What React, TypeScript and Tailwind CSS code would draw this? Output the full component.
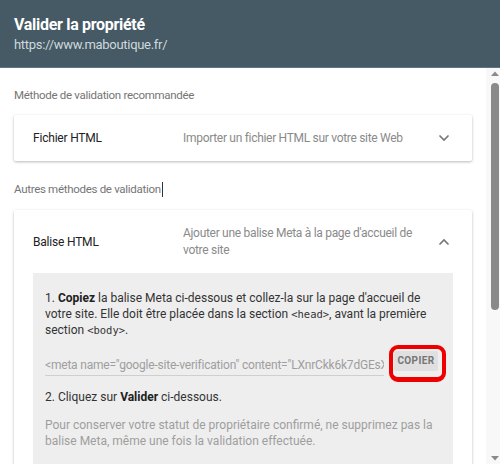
import React from "react";

const Chevron: React.FC<{ up?: boolean }> = ({ up }) => (
  <svg width="12" height="8" viewBox="0 0 12 8" className="shrink-0">
    <path
      d={up ? "M1.5 6.5 L6 2 L10.5 6.5" : "M1.5 1.5 L6 6 L10.5 1.5"}
      fill="none"
      stroke="#757575"
      strokeWidth="1.6"
    />
  </svg>
);

const Scrollbar: React.FC = () => (
  <div className="w-[14px] shrink-0 bg-[#f8f8f8] flex flex-col items-center pt-[3px] pb-[3px]">
    <svg width="8" height="6" viewBox="0 0 8 6" className="ml-[4px]">
      <path d="M0 5 L4 0.5 L8 5 Z" fill="#8a8a8a" />
    </svg>
    <div className="w-[8px] h-[227px] mt-[6px] ml-[4px] rounded-[4px] bg-[#8a8a8a]" />
    <div className="flex-1" />
    <svg width="8" height="6" viewBox="0 0 8 6" className="ml-[4px]">
      <path d="M0 1 L4 5.5 L8 1 Z" fill="#8a8a8a" />
    </svg>
  </div>
);

export default function App() {
  const metaTag =
    '<meta name="google-site-verification" content="LXnrCkk6k7dGEsXq3vYtM2pQwZ8rBn1cHfJ0aUeKdI" />';

  return (
    <div className="w-[500px] h-[464px] flex flex-col overflow-hidden bg-white font-['Roboto',sans-serif]">
      {/* Header */}
      <div className="h-[68px] shrink-0 bg-[#455a64] px-[14px] pt-[15px] border-b border-b-[#5f7480]">
        <div className="text-[16px] leading-[20px] font-bold tracking-[-0.3px] text-white">
          Valider la propriété
        </div>
        <div className="text-[13px] leading-[18px] tracking-[-0.3px] text-[#cfd8dc] mt-[1px]">
          https://www.maboutique.fr/
        </div>
      </div>

      <div className="flex-1 flex min-h-0">
        {/* Content */}
        <div className="flex-1 overflow-hidden px-[14px] pt-[19px]">
          <div className="text-[11.5px] leading-[16px] tracking-[-0.3px] text-[#757575]">
            Méthode de validation recommandée
          </div>

          <div className="mt-[12px] h-[46px] bg-white rounded-[2px] shadow-[0_1px_3px_rgba(0,0,0,0.28)] flex items-center pl-[19px] pr-[22px]">
            <div className="w-[150px] text-[12px] tracking-[-0.2px] text-[#212121]">
              Fichier HTML
            </div>
            <div className="flex-1 text-[12px] tracking-[-0.3px] text-[#8a8a8a]">
              Importer un fichier HTML sur votre site Web
            </div>
            <Chevron />
          </div>

          <div className="mt-[20px] flex items-center text-[11.5px] leading-[16px] tracking-[-0.3px] text-[#757575]">
            Autres méthodes de validation
            <span className="inline-block w-px h-[15px] bg-[#333] ml-px" />
          </div>

          <div className="mt-[13px] bg-white rounded-[2px] shadow-[0_1px_3px_rgba(0,0,0,0.28)] px-[19px] pb-[20px]">
            <div className="h-[63px] flex items-center">
              <div className="w-[150px] text-[12px] tracking-[-0.2px] text-[#212121]">
                Balise HTML
              </div>
              <div className="flex-1 text-[12px] leading-[17px] tracking-[-0.3px] text-[#8a8a8a] pr-[14px]">
                Ajouter une balise Meta à la page d'accueil de votre site
              </div>
              <div className="pr-[3px]">
                <Chevron up />
              </div>
            </div>

            <div className="bg-[#eeeeee] pl-[12px] pr-[15px] pt-[17px] pb-[20px] text-[12px] leading-[16px] text-[#333]">
              <p>
                1. <b className="font-bold text-[#212121]">Copiez</b> la balise Meta
                ci-dessous et collez-la sur la page d'accueil de votre site. Elle doit
                être placée dans la section{" "}
                <span className="font-['DejaVu_Sans_Mono',monospace] text-[10.5px]">&lt;head&gt;</span>,
                avant la première section{" "}
                <span className="font-['DejaVu_Sans_Mono',monospace] text-[10.5px]">&lt;body&gt;</span>.
              </p>

              <div className="mt-[13px] flex items-end">
                <div className="flex-1 min-w-0 overflow-hidden whitespace-nowrap text-[12px] leading-[16px] tracking-[-0.2px] text-[#9e9e9e] border-b border-b-[#cfcfcf] pb-[2px]">
                  {metaTag}
                </div>
                <div className="relative ml-[10px] mb-[5px]">
                  <button className="w-[44px] h-[20px] bg-[#e0e0e0] rounded-[2px] text-[10px] font-bold tracking-[0.4px] text-[#757575]">
                    COPIER
                  </button>
                  <div className="absolute -left-[5px] -top-[6px] -right-[8px] -bottom-[11px] border-[4px] border-[#ee0000] rounded-[9px] border-b-[5px]" />
                </div>
              </div>

              <p className="mt-[13px]">
                2. Cliquez sur <b className="font-bold text-[#212121]">Valider</b> ci-dessous.
              </p>

              <p className="mt-[12px] text-[#9e9e9e] leading-[16px]">
                Pour conserver votre statut de propriétaire confirmé, ne supprimez pas la
                balise Meta, même une fois la validation effectuée.
              </p>
            </div>
          </div>
        </div>

        <Scrollbar />
      </div>
    </div>
  );
}
